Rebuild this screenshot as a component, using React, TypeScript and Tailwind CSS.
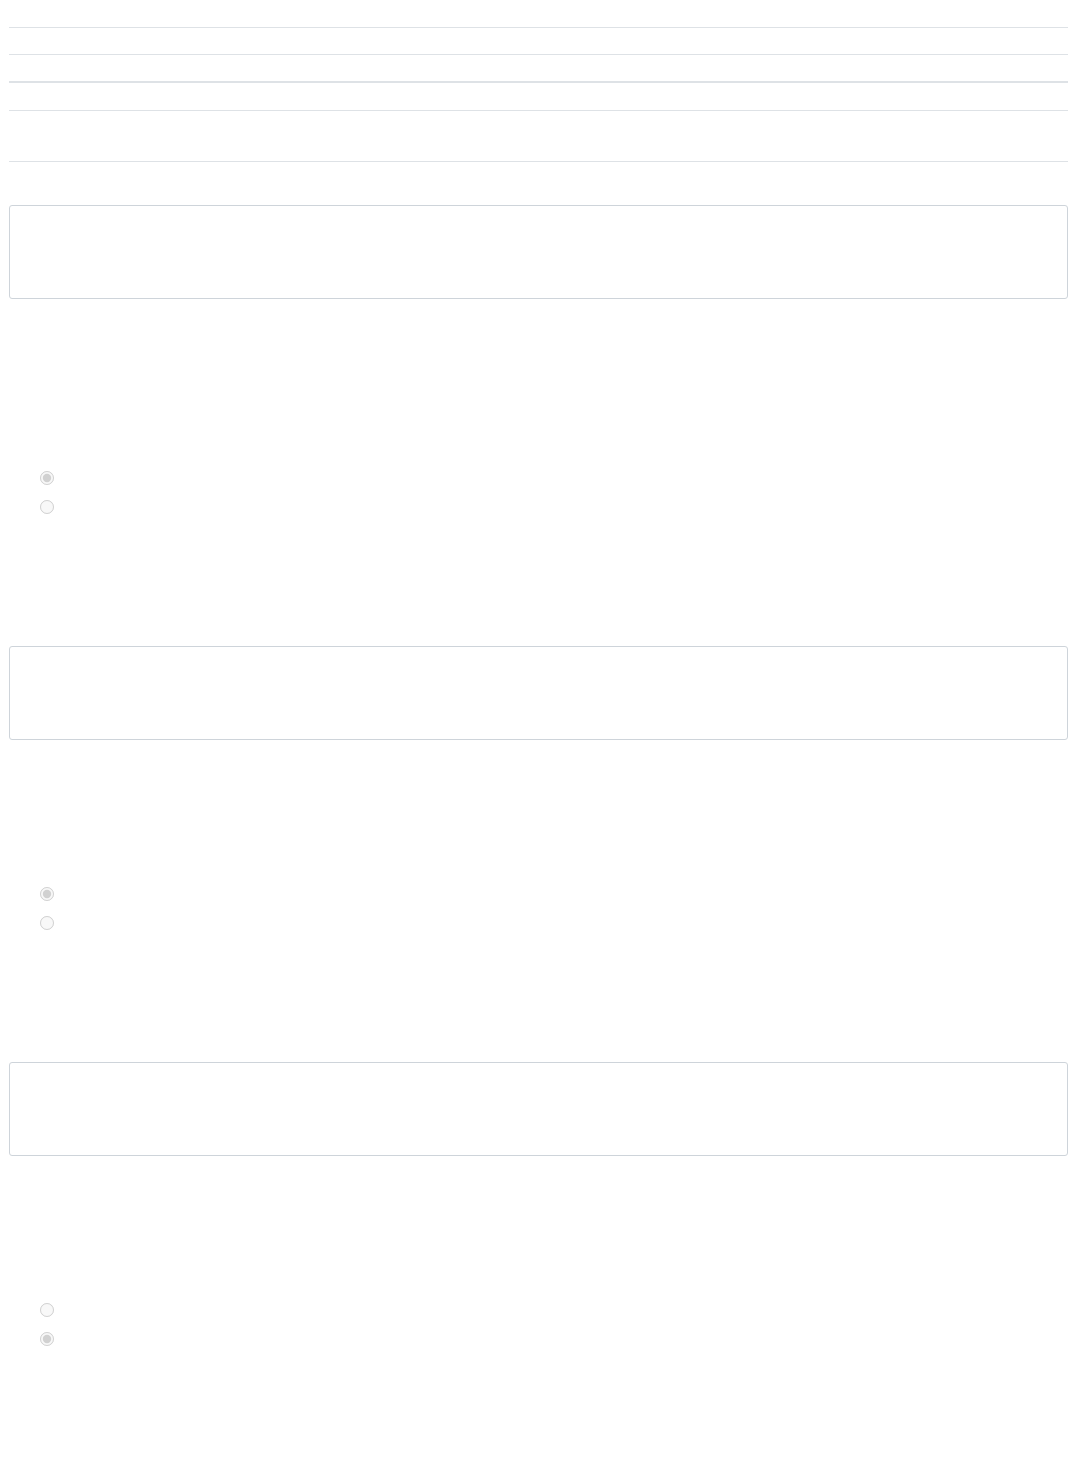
import React from "react";

function Box({ mt }: { mt: string }) {
  return <div className={`${mt} h-[94px] w-full rounded-[3px] border border-[#ced4da] bg-white`} />;
}

function Radios({ checked, mt }: { checked: number; mt: string }) {
  return (
    <div className={`${mt} flex flex-col gap-[15px] pl-[31px]`}>
      <input type="radio" disabled checked={checked === 0} readOnly className="block h-[14px] w-[14px]" />
      <input type="radio" disabled checked={checked === 1} readOnly className="block h-[14px] w-[14px]" />
    </div>
  );
}

export default function App() {
  return (
    <div className="min-h-[1478px] w-[1075px] bg-white px-[9px] pr-[7px]" style={{ fontFamily: '"Liberation Sans", Arial, sans-serif' }}>
      <div className="h-[27px]" />
      <div className="h-[27px] border-t border-[#dee2e6]" />
      <div className="h-[27px] border-t border-[#dee2e6]" />
      <div className="h-[29px] border-t-2 border-[#dee2e6]" />
      <div className="h-[52px] border-y border-[#dee2e6]" />
      <Box mt="mt-[43px]" />
      <Radios checked={0} mt="mt-[172px]" />
      <Box mt="mt-[132px]" />
      <Radios checked={0} mt="mt-[147px]" />
      <Box mt="mt-[132px]" />
      <Radios checked={1} mt="mt-[147px]" />
    </div>
  );
}
